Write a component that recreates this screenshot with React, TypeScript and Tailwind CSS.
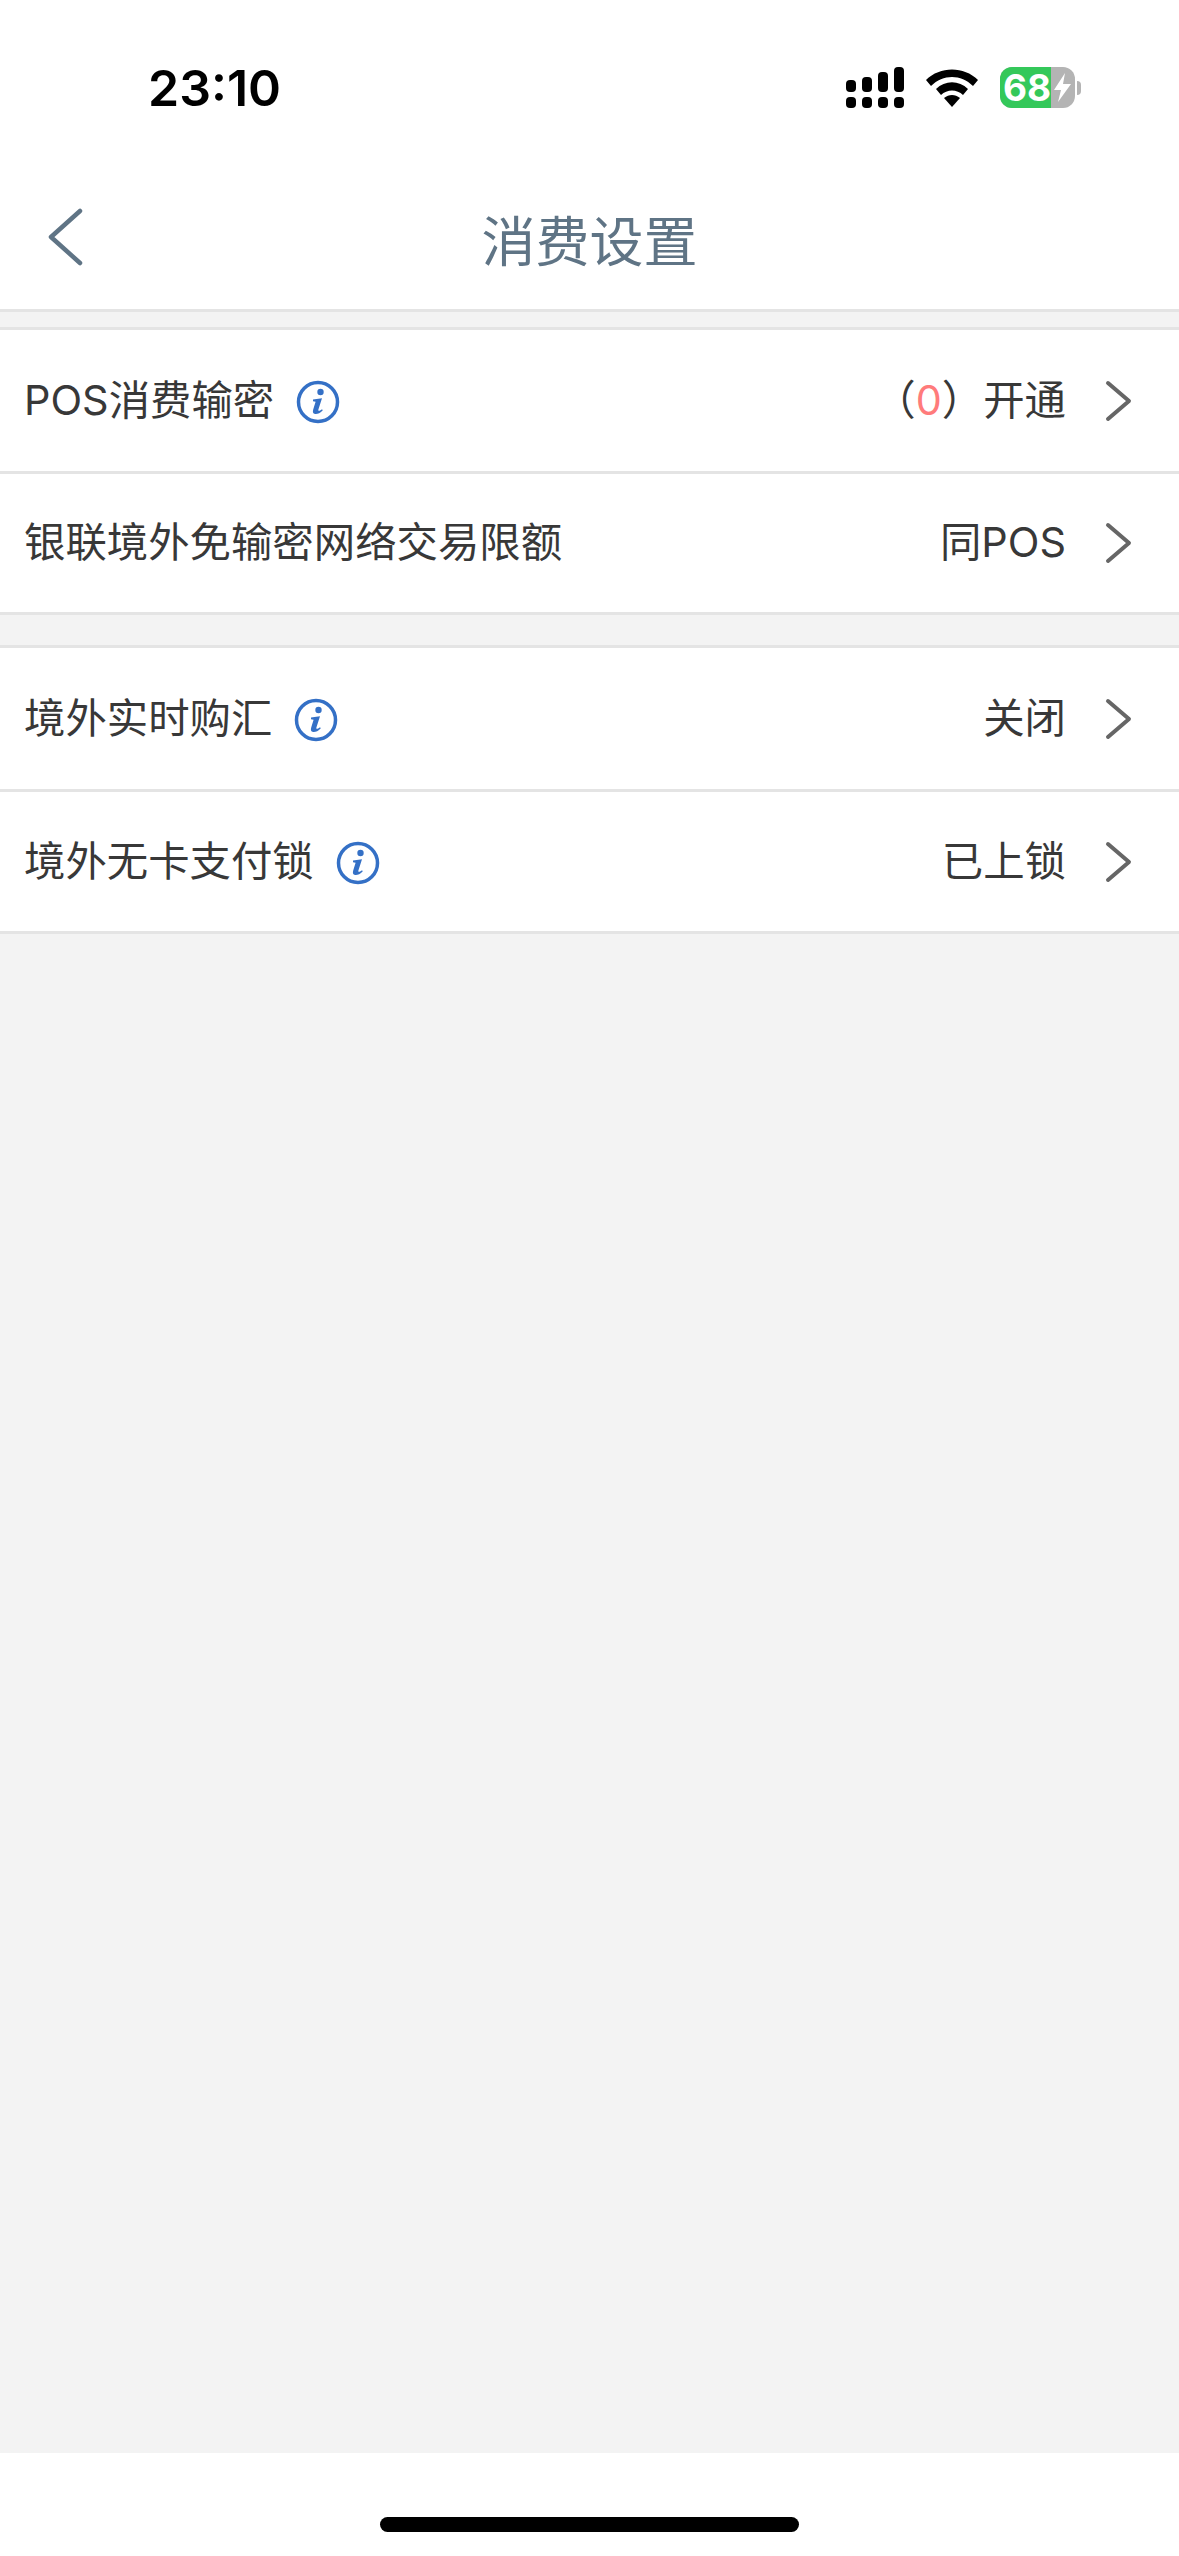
function Chevron() {
  return (
    <svg width="30" height="42" viewBox="0 0 30 42" fill="none" className="ml-[37px] mr-[46px] shrink-0">
      <path d="M5 3L26 21L5 39" stroke="#666666" strokeWidth="4" strokeLinecap="round" strokeLinejoin="round" />
    </svg>
  );
}

function InfoIcon() {
  return (
    <svg width="44" height="44" viewBox="0 0 44 44" fill="none" className="shrink-0">
      <circle cx="22" cy="22" r="19.5" stroke="#3470c6" strokeWidth="3.5" />
      <circle cx="24.5" cy="12" r="3.2" fill="#3470c6" />
      <path
        d="M17 19.5L26 18.2L22.4 29.5C22 31 23 31.4 26 29.2L26.8 30.2C23.8 33.4 20.6 34.6 18.4 33.8C16.8 33.2 16.6 31.4 17.2 29.4L19.6 21.8L17 21.2Z"
        fill="#3470c6"
      />
    </svg>
  );
}

function Row({
  label,
  value,
  info,
  h,
}: {
  label: string;
  value: React.ReactNode;
  info?: boolean;
  h: string;
}) {
  return (
    <div className={`flex items-center bg-white pl-6 ${h}`}>
      <span className="text-[#383838]">{label}</span>
      {info && (
        <span className="ml-[22px] mt-[3px]">
          <InfoIcon />
        </span>
      )}
      <span className="ml-auto text-[#383838]">{value}</span>
      <Chevron />
    </div>
  );
}

function Line() {
  return <div className="h-[3px] bg-[#e4e4e4]" />;
}

export default function App() {
  return (
    <div className="flex h-[2556px] w-[1179px] flex-col bg-[#f3f3f3] font-['Inter','Noto_Sans_CJK_SC',sans-serif] text-[41.4px] leading-none">
      <div className="h-[309px] bg-white">
        <div className="flex h-[176px] items-start pt-[62px] pl-[148px]">
          <span className="text-[50px] leading-[52px] font-semibold text-black">23:10</span>
          <div className="ml-auto flex items-start pr-[98px]">
            <svg width="58" height="41" viewBox="0 0 58 41" fill="black" className="mt-[5px]">
              <rect x="0" y="13" width="10" height="12" rx="4" />
              <rect x="16" y="10" width="10" height="15" rx="4" />
              <rect x="32" y="5" width="10" height="20" rx="4" />
              <rect x="48" y="0" width="10" height="25" rx="4" />
              <rect x="0" y="30" width="10" height="11" rx="4" />
              <rect x="16" y="30" width="10" height="11" rx="4" />
              <rect x="32" y="30" width="10" height="11" rx="4" />
              <rect x="48" y="30" width="10" height="11" rx="4" />
            </svg>
            <svg width="52" height="38" viewBox="0 0 52 38" fill="black" className="mt-[7px] ml-[22px]">
              <path d="M0 11C14 -3 38 -3 52 11L47 17C35 5 17 5 5 17Z" />
              <path d="M10 20C19 11 33 11 42 20L37 26C31 20 21 20 15 26Z" />
              <path d="M18 29C23 25 29 25 34 29L26 38Z" />
            </svg>
            <div className="ml-[22px] mt-[5px] flex items-center">
              <div className="flex h-[41px] w-[75px] rounded-[12px] bg-[#b4b4b4]">
                <div className="flex w-[51px] items-center justify-center rounded-l-[12px] bg-[#34c85a] pl-[3px] text-[37px] font-bold text-white">
                  68
                </div>
                <svg width="24" height="41" viewBox="0 0 24 41" fill="white">
                  <path d="M14 6L3 23H10L7 35L20 17H12Z" />
                </svg>
              </div>
              <div className="ml-[2px] h-[14px] w-[4px] rounded-r-full bg-[#b4b4b4]" />
            </div>
          </div>
        </div>
        <div className="relative flex h-[133px] items-center justify-center">
          <svg width="36" height="58" viewBox="0 0 36 58" fill="none" className="absolute top-[32px] left-[47px]">
            <path d="M33 3L4 29L33 55" stroke="#5f7485" strokeWidth="4.5" strokeLinecap="round" strokeLinejoin="round" />
          </svg>
          <span className="text-[54px] text-[#5f7485]">消费设置</span>
        </div>
      </div>
      <Line />
      <div className="h-[15px]" />
      <Line />
      <Row
        label="POS消费输密"
        info
        h="h-[141px]"
        value={
          <>
            （<span className="text-[#ff7b7b]">0</span>）开通
          </>
        }
      />
      <Line />
      <Row label="银联境外免输密网络交易限额" h="h-[138px]" value="同POS" />
      <Line />
      <div className="h-[30px]" />
      <Line />
      <Row label="境外实时购汇" info h="h-[141px]" value="关闭" />
      <Line />
      <Row label="境外无卡支付锁" info h="h-[139px]" value="已上锁" />
      <Line />
      <div className="flex-1" />
      <div className="flex h-[103px] justify-center bg-white pt-[64px]">
        <div className="h-[15px] w-[419px] rounded-full bg-black" />
      </div>
    </div>
  );
}
